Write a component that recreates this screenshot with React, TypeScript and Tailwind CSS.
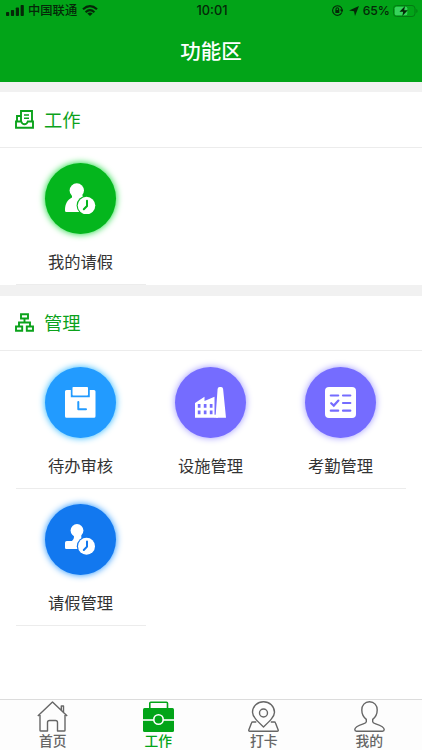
import React, { useState } from 'react';

type Item = { label: string; color: string; icon: React.ReactNode };
type Tab = { label: string; icon: React.ReactNode };

const LeaveIcon = ({ bg }: { bg: string }) => (
    <svg width="31" height="31" viewBox="0 0 31 31" fill="#fff">
        <circle cx="11.800" cy="7.500" r="7.200" />
        <path d="M7 11.500h10l3 6v11.500H1.200Q0 29 0 27.500C0 20.500 2.500 17 7 14.500z" />
        <circle cx="21.500" cy="22.600" r="9.900" fill={bg} />
        <circle cx="21.500" cy="22.600" r="8.800" />
        <path d="M22 17.800v5.200l-3.200 3.300" fill="none" stroke={bg} strokeWidth="2" strokeLinecap="round" />
    </svg>
)

const StampIcon = ({ bg }: { bg: string }) => (
    <svg width="31" height="31" viewBox="0 0 31 31" fill="#fff">
        <circle cx="12" cy="6.500" r="6.400" />
        <path d="M8.300 9h8v4.500q0 2 2 3.700V25H1.200Q0 25 0 23.800V18.800q0-1.800 1.800-1.800H7q2-1.500 2-4z" />
        <circle cx="21.500" cy="22.300" r="9.700" fill={bg} />
        <circle cx="21.500" cy="22.300" r="8.500" />
        <path d="M22 17.500v5.200l-3.200 3.300" fill="none" stroke={bg} strokeWidth="2" strokeLinecap="round" />
    </svg>
)

const ClipboardIcon = () => (
    <svg width="31" height="31" viewBox="0 0 31 31">
        <path d="M1.500 3h4.300v7.200h19V3h4.200q1.500 0 1.500 1.500v24.700q0 1.500-1.500 1.500h-27.500Q0 30.700 0 29.200V4.500Q0 3 1.500 3z" fill="#fff" />
        <rect x="7.500" y="0" width="15.500" height="8.500" rx="0.800" fill="#fff" />
        <path d="M13.300 15v7.300h7.700" fill="none" stroke="#229bff" strokeWidth="2" strokeLinecap="round" strokeLinejoin="round" />
    </svg>
)

const FactoryIcon = () => (
    <svg width="31" height="31" viewBox="0 0 31 31">
        <path d="M0 30.700V16L9.500 9.700v4.300L19.500 9.700v21z" fill="#fff" />
        <path d="M20.500 30.700L22.600 2Q22.800 0 24.600 0h1.500Q27.900 0 28.100 2l2.900 28.700z" fill="#fff" />
        <path d="M19 30.700v-3h4v3z" fill="#fff" />
        <path d="M2.800 17h2.700v3.800H2.800zM8.800 17h2.700v3.800H8.800zM14.800 17h2.700v3.800h-2.700zM2.800 23.500h2.700v3.800H2.800zM8.800 23.500h2.700v3.800H8.800zM14.800 23.500h2.700v3.800h-2.700z" fill="#756cff" />
    </svg>
)

const ChecklistIcon = () => (
    <svg width="31" height="31" viewBox="0 0 31 31">
        <rect width="31" height="31" rx="4" fill="#fff" />
        <path d="M5.800 8.500h7.400M18 8.500h7.300M18 16h7.300M5.800 23.700h7.400M18 23.700h7.300M6.200 16.200l2.600 2.400 4.600-5" fill="none" stroke="#756cff" strokeWidth="2.200" strokeLinecap="round" />
    </svg>
)

const InboxIcon = () => (
    <svg width="19" height="19" viewBox="0 0 19 19" fill="none" stroke="#0ba21b" strokeWidth="1.900">
        <path d="M6 12V1h11v11" />
        <path d="M6 6H2v5M1 11.500h5.200q1 2.800 3.300 2.800t3.300-2.800H18v6.300H1z" />
        <path d="M9 5h5M9 8.300h5" strokeWidth="1.500" />
    </svg>
)

const TreeIcon = () => (
    <svg width="19" height="19" viewBox="0 0 19 19" fill="none" stroke="#0ba21b" strokeWidth="1.900">
        <path d="M6 1.200h7v4.300H6zM1 13.500h6.200v4.300H1zM11.800 13.500H18v4.300h-6.200z" />
        <path d="M9.500 5.500v4M4 13.500v-4h11v4" />
    </svg>
)

const work: Item[] = [
    { label: '我的请假', color: 'bg-[#04b61d] shadow-[0_0_7px_#04d62b]', icon: <LeaveIcon bg="#04b61d" /> },
];

const manage: Item[] = [
    { label: '待办审核', color: 'bg-[#229bff] shadow-[0_0_7px_#22b4ff]', icon: <ClipboardIcon /> },
    { label: '设施管理', color: 'bg-[#756cff] shadow-[0_0_7px_#9c95ff]', icon: <FactoryIcon /> },
    { label: '考勤管理', color: 'bg-[#756cff] shadow-[0_0_7px_#9c95ff]', icon: <ChecklistIcon /> },
    { label: '请假管理', color: 'bg-[#1278ef] shadow-[0_0_7px_#1b90ff]', icon: <StampIcon bg="#1278ef" /> },
];

const tabs: Tab[] = [
    {
        label: '首页',
        icon: <path d="M3 14v15.200q0 .8.800.8h6.700V21.500q0-2 2-2h6q2 0 2 2V30h6.700q.8 0 .8-.8V14M.8 15L15.500 1l14.700 14M24.300 9V5h2.200v6" />,
    },
    {
        label: '工作',
        icon: (
            <>
                <path d="M6.800 8V2.200q0-1 1-1h15.700q1 0 1 1V8" strokeWidth="1.600" />
                <rect x="0" y="7" width="31" height="24" rx="1.500" fill="currentColor" stroke="none" />
                <path d="M0 19h31" stroke="#fff" strokeWidth="1.600" />
                <circle cx="15.500" cy="18.500" r="4.700" fill="currentColor" stroke="#fff" strokeWidth="1.600" />
            </>
        ),
    },
    {
        label: '打卡',
        icon: (
            <>
                <path d="M15.500 26C9 19.800 4.500 15.500 4.500 11.300a11 10.600 0 0 1 22 0c0 4.200-4.500 8.500-11 14.700z" />
                <circle cx="15.500" cy="12" r="4" />
                <path d="M8.300 21H4.700q-.9 0-1.200.9L.8 29q-.3 1.200.9 1.200h27.600q1.200 0 .9-1.200l-2.700-7.100q-.3-.9-1.200-.9h-3.500" />
            </>
        ),
    },
    {
        label: '我的',
        icon: <path d="M15.500.8c-4.800 0-7.700 3.500-7.700 8.200 0 4 1.900 7.300 4.500 9.400v2.300c0 1-1 1.500-3 2.200C4.500 24.500.8 25.800.8 28.500q0 1.700 1.700 1.700h26q1.700 0 1.700-1.700c0-2.700-3.700-4-8.500-5.600-2-.7-3-1.200-3-2.200v-2.300c2.600-2.100 4.500-5.400 4.500-9.400C23.200 4.300 20.300.8 15.500.8z" />,
    },
];

const Section = ({ title, icon, items }: { title: string; icon: React.ReactNode; items: Item[] }) => (
    <section className="bg-white">
        <div className="flex h-[55.5px] items-center gap-[10px] border-b border-[#ececec] pl-[15px] text-lg text-[#0ba21b]">
            {icon}
            <h2 className="pt-px text-[18.300px]">{title}</h2>
        </div>
        <div className="grid grid-cols-3 pr-[16.500px] pl-[15.500px]">
            {items.map((item) => (
                <div key={item.label} className="flex h-[137.5px] flex-col items-center border-b border-[#ececec] pt-[15.5px]">
                    <div className={`flex size-[71px] items-center justify-center rounded-full ${item.color}`}>{item.icon}</div>
                    <p className="mt-4 text-[16.3px] leading-6 text-[#333]">{item.label}</p>
                </div>
            ))}
        </div>
    </section>
)

export default function App() {
    const [active, setActive] = useState<number>(1);

    return (
        <div className="flex h-[750px] w-[422px] flex-col bg-white font-['Inter','Noto_Sans_CJK_SC',sans-serif]">
            <header className="h-[82px] bg-[#02a418]">
                <div className="grid h-[21px] grid-cols-3 items-center pr-1 pl-1.5 text-[12.5px] leading-5 font-medium text-[#052808]">
                    <div className="flex items-center">
                        <svg className="mr-1" width="18" height="11" viewBox="0 0 18 11" fill="currentColor">
                            <rect x="0" y="7" width="3.200" height="4" rx="0.800" />
                            <rect x="4.900" y="5" width="3.200" height="6" rx="0.800" />
                            <rect x="9.800" y="2.500" width="3.200" height="8.500" rx="0.800" />
                            <rect x="14.600" y="0" width="3.200" height="11" rx="0.800" />
                        </svg>
                        <span className="text-[12.3px]">中国联通</span>
                        <svg className="ml-[5px]" width="16" height="11" viewBox="0 0 16 11" fill="none" stroke="currentColor" strokeWidth="2.200">
                            <path d="M1 4.300Q8-2 15 4.300M3.600 7.200Q8 3.200 12.400 7.200" />
                            <path d="M5.300 8.600Q8 6.500 10.700 8.600L8 11z" fill="currentColor" stroke="none" />
                        </svg>
                    </div>
                    <span className="text-center text-[12.8px]">10:01</span>
                    <div className="flex items-center justify-end">
                        <svg className="mr-1.5" width="11" height="11" viewBox="0 0 11 11" fill="none" stroke="currentColor" strokeWidth="1.100">
                            <path d="M9.800 7.500A4.800 4.800 0 1 1 10.200 5M8.800 5h2l-.8 1.500z" />
                            <rect x="3.300" y="5" width="4" height="3" fill="currentColor" stroke="none" />
                            <path d="M4 5V4a1.300 1.300 0 0 1 2.600 0v1" />
                        </svg>
                        <svg className="mr-1" width="10" height="10" viewBox="0 0 10 10" fill="currentColor">
                            <path d="M10 0L6 10 5 5.200 0 4.500z" />
                        </svg>
                        <span className="text-[12.200px]">65%</span>
                        <svg className="ml-[3px]" width="25" height="12" viewBox="0 0 25 12">
                            <rect x="0.500" y="0.500" width="21.500" height="11" rx="3" fill="none" stroke="#037b13" />
                            <rect x="1.800" y="1.800" width="12.500" height="8.400" rx="1.500" fill="#37d25c" />
                            <path d="M23.300 4v4q1.300-.6 1.300-2t-1.300-2z" fill="#037b13" />
                            <path d="M12 1L6.500 6.700h3.700L9.300 11l5.500-5.700h-3.600z" fill="#052808" />
                        </svg>
                    </div>
                </div>
                <h1 className="mt-4 text-center text-[20.500px] leading-[30px] font-medium text-white">功能区</h1>
            </header>
            <main className="flex flex-1 flex-col">
                <div className="h-[10px] bg-[#f1f1f1]" />
                <Section title="工作" icon={<InboxIcon />} items={work} />
                <div className="h-[10.500px] bg-[#f1f1f1]" />
                <Section title="管理" icon={<TreeIcon />} items={manage} />
            </main>
            <nav className="grid h-[51px] grid-cols-4 border-t border-[#dcdcdc] bg-[#fdfdfd]">
                {tabs.map((tab, index) => (
                    <button
                        key={tab.label}
                        onClick={() => setActive(index)}
                        className={`flex flex-col items-center pt-px text-[13.8px] leading-[18px] font-medium ${active === index ? 'text-[#02a418]' : 'text-[#666]'}`}
                    >
                        <svg width="31" height="31" viewBox="0 0 31 31" fill="none" stroke="currentColor" strokeWidth="1.400" strokeLinejoin="round" className="shrink-0">
                            {tab.icon}
                        </svg>
                        <span>{tab.label}</span>
                    </button>
                ))}
            </nav>
        </div>
    )
}
